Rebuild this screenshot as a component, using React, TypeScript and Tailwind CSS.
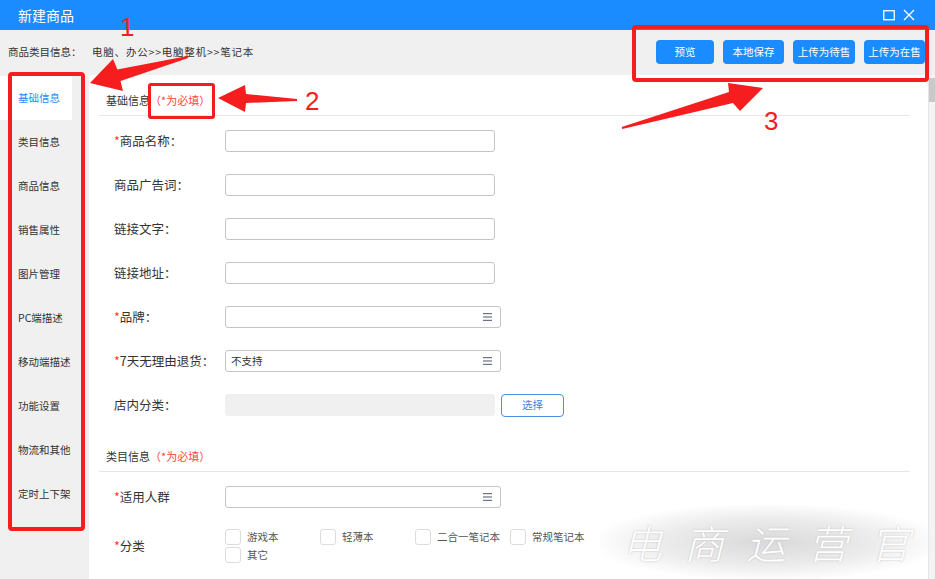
import React from "react";

const F = { fontFamily: '"Noto Sans CJK SC", "Noto Sans", sans-serif' };

function Label({ text, req }: { text: string; req?: boolean }) {
  return (
    <div className="w-[111px] shrink-0 text-[12.5px] text-[#333] leading-none">
      {req && <span className="text-[#f33]">*</span>}
      {text}
    </div>
  );
}

function TextInput() {
  return <div className="w-[270px] h-[22px] rounded-[3px] border border-[#c4c4c4] bg-white" />;
}

function SelectInput({ value }: { value?: string }) {
  return (
    <div className="w-[276px] h-[22px] rounded-[3px] border border-[#c4c4c4] bg-white flex items-center justify-between pl-[5px] pr-[8px]">
      <span className="text-[10.5px] text-[#333] leading-none">{value ?? ""}</span>
      <svg width="9" height="8" viewBox="0 0 9 8">
        <rect x="0" y="0" width="9" height="1.2" fill="#6b7280" />
        <rect x="0" y="3.4" width="9" height="1.2" fill="#6b7280" />
        <rect x="0" y="6.8" width="9" height="1.2" fill="#6b7280" />
      </svg>
    </div>
  );
}

function Row({ children, h = "h-[44px]" }: { children: React.ReactNode; h?: string }) {
  return <div className={`flex items-center pl-[15px] ${h}`}>{children}</div>;
}

function Check({ text }: { text: string }) {
  return (
    <div className="flex items-center w-[95px] h-[18px]">
      <div className="w-[16px] h-[16px] rounded-[3px] border border-[#dcdcdc] bg-white" />
      <span className="ml-[6px] text-[10.5px] text-[#555] leading-none">{text}</span>
    </div>
  );
}

export default function App() {
  const side = ["基础信息", "类目信息", "商品信息", "销售属性", "图片管理", "PC端描述", "移动端描述", "功能设置", "物流和其他", "定时上下架"];
  return (
    <div className="relative w-[935px] h-[579px] overflow-hidden bg-white" style={F}>
      {/* title bar */}
      <div className="h-[30px] bg-[#1a8cff] flex items-center justify-between pl-[18px] pr-[20px]">
        <span className="text-white text-[14px] leading-none">新建商品</span>
        <div className="flex items-center gap-[8px]">
          <svg width="12" height="12" viewBox="0 0 12 12">
            <rect x="0.75" y="1.75" width="10.5" height="9" fill="none" stroke="white" strokeWidth="1.3" />
          </svg>
          <svg width="12" height="12" viewBox="0 0 12 12">
            <path d="M1 1 L11 11 M11 1 L1 11" stroke="white" strokeWidth="1.3" />
          </svg>
        </div>
      </div>

      <div className="bg-[#f0f0f0]">
        {/* header */}
        <div className="h-[45px] flex items-center justify-between pl-[8px] pr-[10px]">
          <div className="flex items-center text-[10.5px] text-[#333] leading-none">
            <span className="w-[84px]">商品类目信息：</span>
            <span className="tracking-[0.8px]">电脑、办公&gt;&gt;电脑整机&gt;&gt;笔记本</span>
          </div>
          <div className="flex items-center gap-[9px] mt-[-1px]">
            {[["预览", "w-[58px]"], ["本地保存", "w-[61px]"], ["上传为待售", "w-[62px]"], ["上传为在售", "w-[61px]"]].map(([t, w]) => (
              <div key={t} className={`${w} h-[24px] rounded-[4px] bg-[#1a8cff] text-white text-[10.5px] flex items-center justify-center leading-none`}>
                {t}
              </div>
            ))}
          </div>
        </div>

        <div className="flex h-[504px]">
          {/* sidebar */}
          <div className="w-[89px] shrink-0 pt-[1px]">
            {side.map((s, i) => (
              <div key={s} className={`h-[44px] flex items-center pl-[18px] text-[10.5px] leading-none ${i === 0 ? "text-[#1a8cff] bg-white w-[72px]" : "text-[#333]"}`}>
                {s}
              </div>
            ))}
          </div>

          {/* main */}
          <div className="flex-1 bg-white pl-[10px] pr-[18px]">
            <div className="pt-[17px] pb-[7px] pl-[7px] border-b border-[#e6e6e6] text-[11px] leading-[16px] text-[#333]">
              基础信息<span className="text-[#f44]">（*为必填）</span>
            </div>
            <div className="mt-[3px]">
              <Row><Label text="商品名称：" req /><TextInput /></Row>
              <Row><Label text="商品广告词：" /><TextInput /></Row>
              <Row><Label text="链接文字：" /><TextInput /></Row>
              <Row><Label text="链接地址：" /><TextInput /></Row>
              <Row><Label text="品牌：" req /><SelectInput /></Row>
              <Row><Label text="7天无理由退货：" req /><SelectInput value="不支持" /></Row>
              <Row>
                <Label text="店内分类：" />
                <div className="w-[270px] h-[22px] rounded-[3px] bg-[#f0f0f0]" />
                <div className="ml-[6px] w-[63px] h-[23px] rounded-[4px] border-[1.5px] border-[#4a90e2] bg-white text-[#3a82d8] text-[10.5px] flex items-center justify-center leading-none">
                  选择
                </div>
              </Row>
            </div>
            <div className="pt-[21px] pb-[7px] pl-[7px] border-b border-[#e6e6e6] text-[11px] leading-[16px] text-[#333]">
              类目信息<span className="text-[#f44]">（*为必填）</span>
            </div>
            <div className="mt-[3px]">
              <Row><Label text="适用人群" req /><SelectInput /></Row>
              <Row h="h-[54px]">
                <Label text="分类" req />
                <div className="flex flex-col">
                  <div className="flex">
                    <Check text="游戏本" />
                    <Check text="轻薄本" />
                    <Check text="二合一笔记本" />
                    <Check text="常规笔记本" />
                  </div>
                  <div className="flex">
                    <Check text="其它" />
                  </div>
                </div>
              </Row>
            </div>
          </div>

          {/* scrollbar */}
          <div className="w-[7px] shrink-0 bg-[#f4f4f4] border-l border-[#e4e4e4] relative">
            <div className="absolute left-0 right-0 top-[3px] h-[24px] bg-[#c9c9c9]" />
          </div>
        </div>
      </div>

      {/* watermark */}
      <div className="absolute left-[600px] top-[505px] w-[335px] h-[74px] bg-[radial-gradient(ellipse_at_center,#d9d9d9_0%,#ececec_45%,#ffffff00_75%)] flex items-center pl-[22px]">
        <span className="whitespace-nowrap text-white text-[40px] font-light tracking-[22px] leading-none italic [text-shadow:0_0_2px_#bbb]">电商运营官</span>
      </div>

      {/* annotations */}
      <div className="absolute left-[8px] top-[72px] w-[77px] h-[459px] border-[4px] border-[#f51d1d] rounded-[4px]" />
      <div className="absolute left-[148px] top-[83px] w-[67px] h-[36px] border-[3px] border-[#f51d1d] rounded-[3px]" />
      <div className="absolute left-[632px] top-[25px] w-[297px] h-[57px] border-[4px] border-[#f51d1d] rounded-[4px]" />
      <div className="absolute left-[120px] top-[14px] text-[#f51d1d] text-[26px] leading-none" style={{ fontFamily: '"Liberation Sans", sans-serif' }}>1</div>
      <div className="absolute left-[305px] top-[88px] text-[#f51d1d] text-[26px] leading-none" style={{ fontFamily: '"Liberation Sans", sans-serif' }}>2</div>
      <div className="absolute left-[764px] top-[108px] text-[#f51d1d] text-[26px] leading-none" style={{ fontFamily: '"Liberation Sans", sans-serif' }}>3</div>
      <svg className="absolute left-0 top-0" width="935" height="579" viewBox="0 0 935 579">
        <polygon fill="#f51d1d" points="187.7,56 117.4,69.5 113,59 90,83 123,91 120.5,81 188.3,58" />
        <polygon fill="#f51d1d" points="297,99 246,94 245,85 218,98 245,112 246,103 297,101" />
        <polygon fill="#f51d1d" points="621.7,127 729,92 728,83 763,88 740,111 733,103 622.3,129" />
      </svg>
    </div>
  );
}
